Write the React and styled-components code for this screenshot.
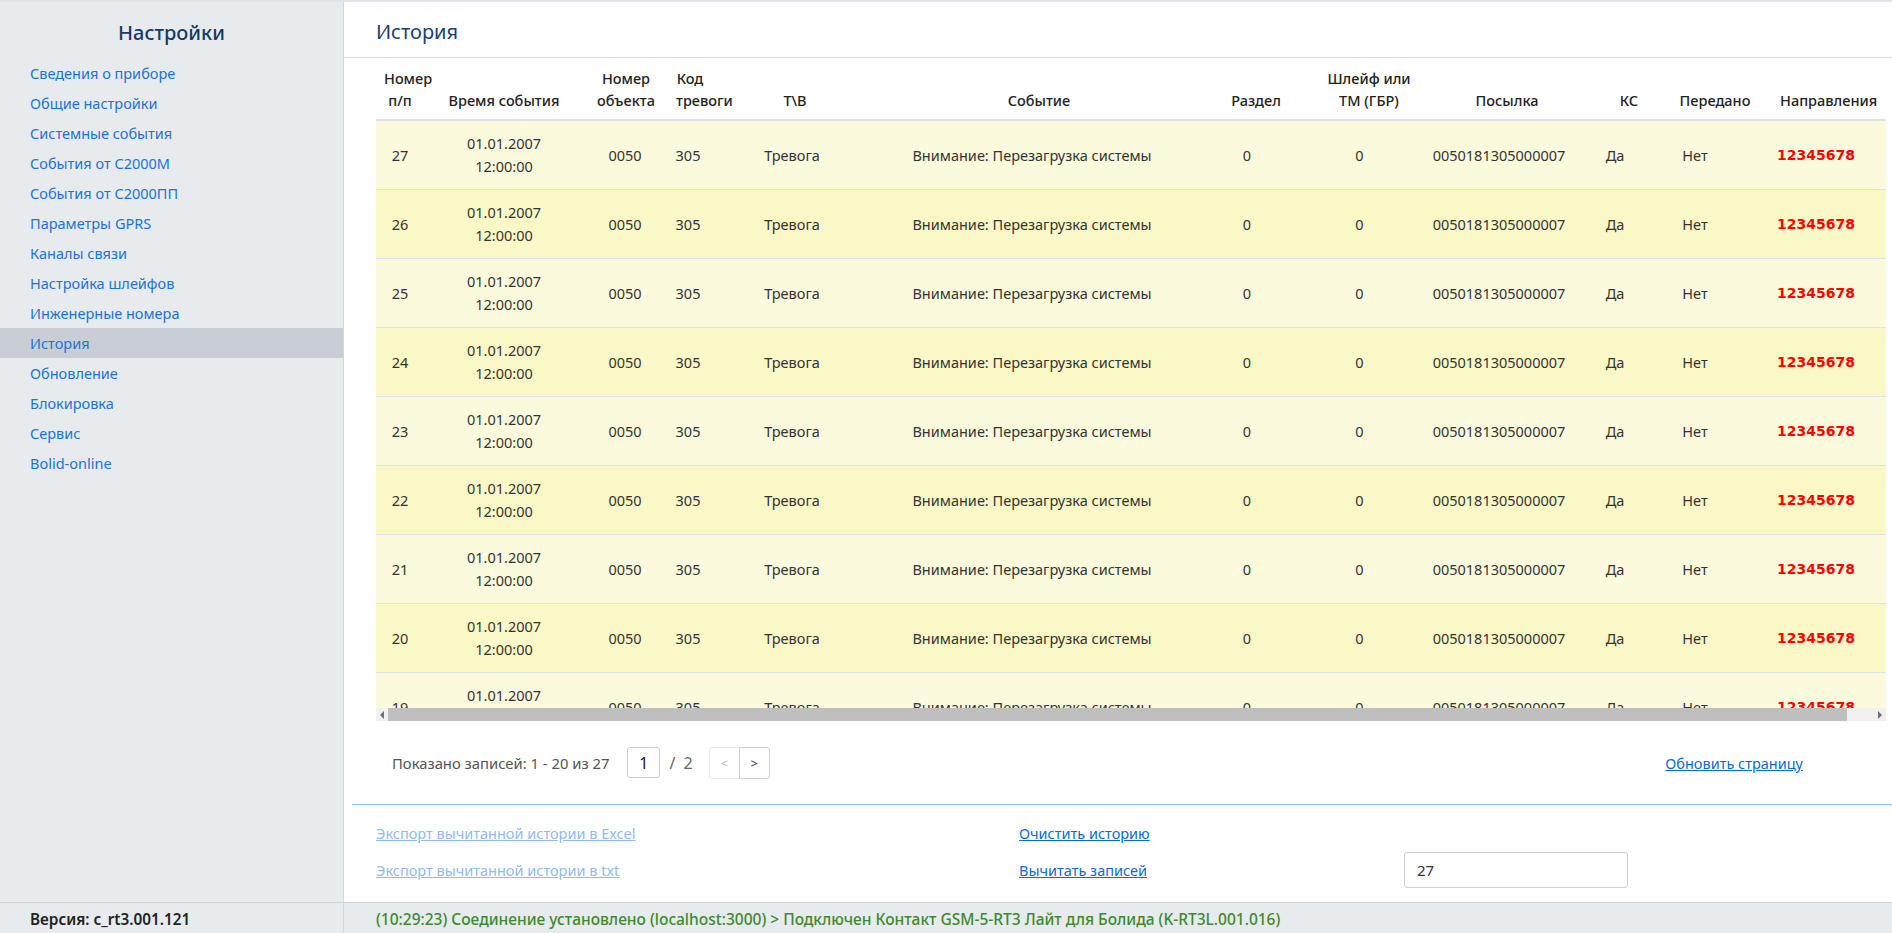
import React from 'react'
import styled, { createGlobalStyle } from 'styled-components'

const GlobalStyle = createGlobalStyle`
  html, body {
    margin: 0;
    padding: 0;
    height: 100%;
  }
  body {
    font-family: "Noto Sans", "Open Sans", sans-serif;
    color: #333;
    background: #fff;
  }
  * {
    box-sizing: border-box;
  }
`

const Page = styled.div`
  display: flex;
  height: 100vh;
  border-top: 2px solid #dfe2e6;
  overflow: hidden;
`

const Sidebar = styled.aside`
  width: 344px;
  flex-shrink: 0;
  background: #e8ebee;
  border-right: 1px solid #d3d7db;
  display: flex;
  flex-direction: column;
`

const SideTitle = styled.h2`
  margin: 0;
  height: 56px;
  padding-top: 4px;
  display: flex;
  align-items: center;
  justify-content: center;
  font-size: 20px;
  font-weight: 500;
  color: #163a66;
`

const NavList = styled.nav`
  display: flex;
  flex-direction: column;
`

const NavItem = styled.a`
  height: 30px;
  display: flex;
  align-items: center;
  padding-left: 30px;
  font-size: 14.5px;
  color: #1a73d9;
  text-decoration: none;
  background: ${p => (p.$active ? '#c9cdd5' : 'transparent')};
  cursor: pointer;
`

const SideFooter = styled.div`
  margin-top: auto;
  height: 31px;
  padding: 2px 0 0 30px;
  border-top: 1px solid #d0d4d8;
  display: flex;
  align-items: center;
  font-size: 15.3px;
  font-weight: 600;
  color: #222;
`

const Main = styled.main`
  flex: 1;
  min-width: 0;
  display: flex;
  flex-direction: column;
`

const Title = styled.h1`
  margin: 0;
  height: 56px;
  padding: 4px 0 0 32px;
  border-bottom: 1px solid #dadde1;
  display: flex;
  align-items: center;
  font-size: 20px;
  font-weight: 400;
  color: #1b3f6e;
`

const TableArea = styled.div`
  padding: 0 6px 0 32px;
`

const TableScroll = styled.div`
  overflow: hidden;
`

const HeadTable = styled.table`
  width: 1538px;
  table-layout: fixed;
  border-collapse: collapse;
`

const Th = styled.th`
  height: 62px;
  padding: 8px 8px;
  vertical-align: bottom;
  text-align: ${p => p.$align || 'center'};
  padding-left: ${p => p.$pl || '8px'};
  font-size: 14.5px;
  line-height: 22px;
  font-weight: 500;
  color: #222;
  border-bottom: 2px solid #dee2e6;
`

const BodyClip = styled.div`
  width: 1538px;
  height: 587px;
  overflow: hidden;
`

const BodyTable = styled.table`
  width: 1513px;
  table-layout: fixed;
  border-collapse: separate;
  border-spacing: 0;
`

const Row = styled.tr`
  background: ${p => (p.$odd ? '#faf8c6' : '#fbfadc')};
`

const Td = styled.td`
  height: 69px;
  padding: 11px 8px;
  border-top: 1px solid #dee2e6;
  text-align: center;
  vertical-align: middle;
  font-size: 14.5px;
  line-height: 23px;
  color: #333;
  white-space: nowrap;

  tr:first-child > & {
    height: 68px;
    border-top: 0;
  }
`

const Dirs = styled.span`
  font-family: "DejaVu Sans", Verdana, sans-serif;
  font-weight: 700;
  font-size: 14px;
  color: #ff0000;
`

const ScrollBar = styled.div`
  height: 13px;
  display: flex;
  align-items: stretch;
  background: #f1f1f1;
`

const ScrollArrow = styled.span`
  width: 12px;
  flex-shrink: 0;
  display: flex;
  align-items: center;
  justify-content: center;

  &::before {
    content: '';
    width: 0;
    height: 0;
    border-top: 4px solid transparent;
    border-bottom: 4px solid transparent;
    ${p => (p.$dir === 'left'
      ? 'border-right: 4px solid #6e6e6e;'
      : 'border-left: 4px solid #6e6e6e;')}
  }
`

const ScrollTrack = styled.div`
  flex: 1;
  display: flex;
`

const ScrollThumb = styled.div`
  height: 100%;
  background: #bfbfbf;
`

const Pager = styled.div`
  height: 83px;
  padding: 0 89px 0 48px;
  display: flex;
  align-items: center;
  justify-content: space-between;
`

const PagerLeft = styled.div`
  display: flex;
  align-items: center;
`

const PagerInfo = styled.span`
  font-size: 14.8px;
  color: #555;
  margin-right: 18px;
`

const PageBox = styled.div`
  width: 33px;
  height: 31px;
  border: 1px solid #cfcfcf;
  border-radius: 3px;
  display: flex;
  align-items: center;
  justify-content: center;
  font-size: 16px;
  color: #222;
`

const PageTotal = styled.span`
  margin: 0 16px 0 9px;
  font-size: 16px;
  word-spacing: 4px;
  color: #666;
`

const BtnGroup = styled.div`
  display: flex;
`

const NavBtn = styled.button`
  width: 31px;
  height: 32px;
  padding: 0;
  background: #fff;
  border: 1px solid ${p => (p.disabled ? '#e6e6e6' : '#cfcfcf')};
  color: ${p => (p.disabled ? '#bbb' : '#333')};
  font-family: "Noto Sans", sans-serif;
  font-size: 13px;
  border-radius: ${p => (p.$side === 'left' ? '3px 0 0 3px' : '0 3px 3px 0')};
  & + & {
    border-left-color: #cfcfcf;
    margin-left: -1px;
  }
`

const Link = styled.a`
  font-size: 14.5px;
  color: ${p => (p.$faded ? '#8dbcef' : '#0b6bd4')};
  text-decoration: underline;
  cursor: pointer;
`

const Actions = styled.div`
  flex: 1;
  margin-left: 8px;
  padding: 10px 0 0 24px;
  border-top: 1px solid #93c1ee;
  display: grid;
  grid-template-columns: 643px 385px 224px;
  grid-template-rows: 36px 36px;
  row-gap: 1px;
  align-items: center;
  align-content: start;
`

const CountInput = styled.input`
  width: 224px;
  height: 36px;
  padding: 0 12px;
  border: 1px solid #cfcfcf;
  border-radius: 3px;
  font-family: "Noto Sans", sans-serif;
  font-size: 15px;
  color: #333;
  outline: none;
`

const StatusBar = styled.div`
  height: 31px;
  padding: 2px 0 0 32px;
  border-top: 1px solid #d0d4d8;
  background: #e8ebee;
  display: flex;
  align-items: center;
  font-size: 15.5px;
  font-weight: 500;
  color: #3c8a2c;
  white-space: nowrap;
`

const menu = [
  'Сведения о приборе',
  'Общие настройки',
  'Системные события',
  'События от С2000М',
  'События от С2000ПП',
  'Параметры GPRS',
  'Каналы связи',
  'Настройка шлейфов',
  'Инженерные номера',
  'История',
  'Обновление',
  'Блокировка',
  'Сервис',
  'Bolid-online'
]

const headCols = [48, 160, 84, 44, 166, 322, 112, 114, 162, 82, 90, 154]
const bodyCols = [48, 160, 82, 44, 164, 316, 114, 111, 168, 64, 96, 146]
const TABLE_WIDTH = 1538
const VIEW_WIDTH = 1510

const headers = [
  { label: ['Номер', 'п/п'] },
  { label: ['Время события'] },
  { label: ['Номер', 'объекта'] },
  { label: ['Код', 'тревоги'] },
  { label: ['Т\\В'] },
  { label: ['Событие'] },
  { label: ['Раздел'] },
  { label: ['Шлейф или', 'ТМ (ГБР)'] },
  { label: ['Посылка'] },
  { label: ['КС'] },
  { label: ['Передано'] },
  { label: ['Направления'], align: 'left', pl: '20px' }
]

const rows = Array.from({ length: 20 }, (_, i) => 27 - i)

export default function App () {
  const thumbShare = (VIEW_WIDTH / TABLE_WIDTH) * 100

  return (
    <>
      <GlobalStyle />
      <Page>
        <Sidebar>
          <SideTitle>Настройки</SideTitle>
          <NavList>
            {menu.map(item => (
              <NavItem key={item} $active={item === 'История'}>{item}</NavItem>
            ))}
          </NavList>
          <SideFooter>Версия: c_rt3.001.121</SideFooter>
        </Sidebar>

        <Main>
          <Title>История</Title>
          <TableArea>
            <TableScroll>
              <HeadTable>
                <colgroup>
                  {headCols.map((w, i) => <col key={i} style={{ width: w }} />)}
                </colgroup>
                <thead>
                  <tr>
                    {headers.map((h, i) => (
                      <Th key={i} $align={h.align} $pl={h.pl}>
                        {h.label.map((line, j) => (
                          <React.Fragment key={j}>
                            {j > 0 && <br />}
                            {line}
                          </React.Fragment>
                        ))}
                      </Th>
                    ))}
                  </tr>
                </thead>
              </HeadTable>
              <BodyClip>
                <BodyTable>
                  <colgroup>
                    {bodyCols.map((w, i) => <col key={i} style={{ width: w }} />)}
                  </colgroup>
                  <tbody>
                    {rows.map((n, i) => (
                      <Row key={n} $odd={i % 2 === 1}>
                        <Td>{n}</Td>
                        <Td>01.01.2007<br />12:00:00</Td>
                        <Td>0050</Td>
                        <Td>305</Td>
                        <Td>Тревога</Td>
                        <Td>Внимание: Перезагрузка системы</Td>
                        <Td>0</Td>
                        <Td>0</Td>
                        <Td>0050181305000007</Td>
                        <Td>Да</Td>
                        <Td>Нет</Td>
                        <Td><Dirs>12345678</Dirs></Td>
                      </Row>
                    ))}
                  </tbody>
                </BodyTable>
              </BodyClip>
            </TableScroll>
            <ScrollBar>
              <ScrollArrow $dir='left' />
              <ScrollTrack>
                <ScrollThumb style={{ width: `${thumbShare}%` }} />
              </ScrollTrack>
              <ScrollArrow $dir='right' />
            </ScrollBar>
          </TableArea>

          <Pager>
            <PagerLeft>
              <PagerInfo>Показано записей: 1 - 20 из 27</PagerInfo>
              <PageBox>1</PageBox>
              <PageTotal>/ 2</PageTotal>
              <BtnGroup>
                <NavBtn disabled $side='left'>&lt;</NavBtn>
                <NavBtn $side='right'>&gt;</NavBtn>
              </BtnGroup>
            </PagerLeft>
            <Link>Обновить страницу</Link>
          </Pager>

          <Actions>
            <div><Link $faded>Экспорт вычитанной истории в Excel</Link></div>
            <div><Link>Очистить историю</Link></div>
            <div />
            <div><Link $faded>Экспорт вычитанной истории в txt</Link></div>
            <div><Link>Вычитать записей</Link></div>
            <CountInput defaultValue='27' />
          </Actions>

          <StatusBar>
            (10:29:23) Соединение установлено (localhost:3000) &gt; Подключен Контакт GSM-5-RT3 Лайт для Болида (K-RT3L.001.016)
          </StatusBar>
        </Main>
      </Page>
    </>
  )
}
